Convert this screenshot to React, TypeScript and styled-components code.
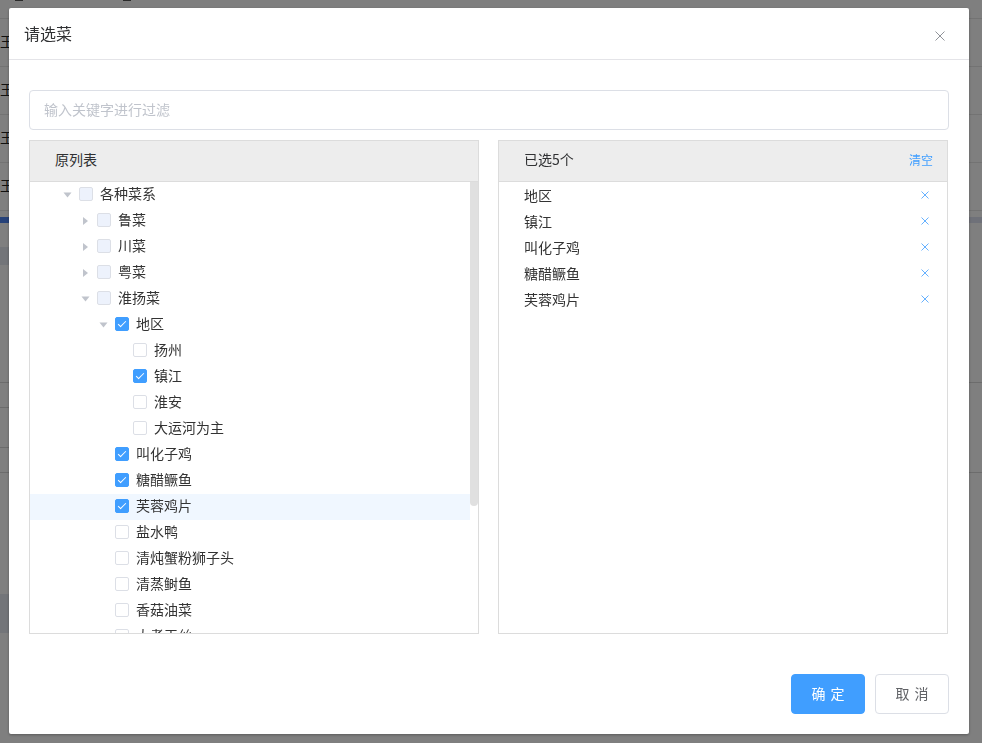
import styled, { createGlobalStyle } from "styled-components";

type CheckState = "checked" | "partial" | "empty";
type Caret = "open" | "closed" | "none";

interface TreeNode {
  label: string;
  level: number;
  caret: Caret;
  state: CheckState;
  current?: boolean;
}

const treeNodes: TreeNode[] = [
  { label: "各种菜系", level: 0, caret: "open", state: "partial" },
  { label: "鲁菜", level: 1, caret: "closed", state: "partial" },
  { label: "川菜", level: 1, caret: "closed", state: "partial" },
  { label: "粤菜", level: 1, caret: "closed", state: "partial" },
  { label: "淮扬菜", level: 1, caret: "open", state: "partial" },
  { label: "地区", level: 2, caret: "open", state: "checked" },
  { label: "扬州", level: 3, caret: "none", state: "empty" },
  { label: "镇江", level: 3, caret: "none", state: "checked" },
  { label: "淮安", level: 3, caret: "none", state: "empty" },
  { label: "大运河为主", level: 3, caret: "none", state: "empty" },
  { label: "叫化子鸡", level: 2, caret: "none", state: "checked" },
  { label: "糖醋鳜鱼", level: 2, caret: "none", state: "checked" },
  { label: "芙蓉鸡片", level: 2, caret: "none", state: "checked", current: true },
  { label: "盐水鸭", level: 2, caret: "none", state: "empty" },
  { label: "清炖蟹粉狮子头", level: 2, caret: "none", state: "empty" },
  { label: "清蒸鲥鱼", level: 2, caret: "none", state: "empty" },
  { label: "香菇油菜", level: 2, caret: "none", state: "empty" },
  { label: "大煮干丝", level: 2, caret: "none", state: "empty" },
];

const selected = ["地区", "镇江", "叫化子鸡", "糖醋鳜鱼", "芙蓉鸡片"];

const App = () => {
  return (
    <>
      <GlobalStyle />
      <Page>
        <TopRow>
          <TopMark />
          <TopMark />
        </TopRow>
        {[0, 1, 2, 3].map((i) => (
          <DataRow key={i}>王</DataRow>
        ))}
        <Band>
          <BandStart />
        </Band>
        <SideBlock $gap={24} $height={18} />
        <Rule $gap={117} />
        <Rule $gap={24} $short />
        <Rule $gap={39} $short />
        <Rule $gap={24} />
        <SideBlock $gap={121} $height={39} />
      </Page>
      <Mask />
      <Dialog>
        <DialogHeader>
          <DialogTitle>请选菜</DialogTitle>
          <CloseIcon width="10" height="10" viewBox="0 0 10 10">
            <path d="M0.5 0.5 L9.5 9.5 M9.5 0.5 L0.5 9.5" />
          </CloseIcon>
        </DialogHeader>
        <DialogBody>
          <FilterInput placeholder="输入关键字进行过滤" />
          <Panels>
            <Panel>
              <PanelHeader>原列表</PanelHeader>
              <TreeArea>
                <Tree>
                  {treeNodes.map((node) => (
                    <TreeRow key={node.label} $level={node.level} $current={node.current}>
                      <CaretSlot>
                        {node.caret !== "none" && <CaretIcon $open={node.caret === "open"} />}
                      </CaretSlot>
                      <Check $state={node.state} />
                      <TreeLabel>{node.label}</TreeLabel>
                    </TreeRow>
                  ))}
                </Tree>
                <ScrollTrack>
                  <ScrollThumb />
                </ScrollTrack>
              </TreeArea>
            </Panel>
            <Panel>
              <PanelHeader>
                已选5个
                <ClearLink>清空</ClearLink>
              </PanelHeader>
              <SelectedList>
                {selected.map((label) => (
                  <SelectedRow key={label}>
                    <SelectedLabel>{label}</SelectedLabel>
                    <RemoveIcon width="8" height="8" viewBox="0 0 8 8">
                      <path d="M0.5 0.5 L7.5 7.5 M7.5 0.5 L0.5 7.5" />
                    </RemoveIcon>
                  </SelectedRow>
                ))}
              </SelectedList>
            </Panel>
          </Panels>
        </DialogBody>
        <DialogFooter>
          <PrimaryButton>确 定</PrimaryButton>
          <PlainButton>取 消</PlainButton>
        </DialogFooter>
      </Dialog>
    </>
  );
};

export default App;

const GlobalStyle = createGlobalStyle`
  html, body {
    margin: 0;
    padding: 0;
    height: 100%;
    overflow: hidden;
    background: #fff;
    font-family: "Noto Sans CJK SC", "Liberation Sans", sans-serif;
  }
  * {
    box-sizing: border-box;
  }
`;

const Page = styled.div`
  display: flex;
  flex-direction: column;
  height: 743px;
  overflow: hidden;
  color: #333;
`;

const TopRow = styled.div`
  display: flex;
  gap: 100px;
  height: 19px;
  padding-left: 15px;
  border-bottom: 1px solid #e6e6e6;
`;

const TopMark = styled.div`
  width: 8px;
  height: 1px;
  background: #555;
`;

const DataRow = styled.div`
  display: flex;
  align-items: center;
  height: 48px;
  padding-bottom: 4px;
  font-size: 14px;
  border-bottom: 1px solid #e6e6e6;
  color: #222;
`;

const Band = styled.div`
  display: flex;
  height: 6px;
  margin-top: 6px;
  background: #dfe3f2;
`;

const BandStart = styled.div`
  width: 60px;
  background: #4f84f2;
`;

const SideBlock = styled.div<{ $gap: number; $height: number }>`
  width: 60px;
  height: ${(p) => p.$height}px;
  margin-top: ${(p) => p.$gap}px;
  background: #e6ebf2;
`;

const Rule = styled.div<{ $gap: number; $short?: boolean }>`
  flex-shrink: 0;
  width: ${(p) => (p.$short ? "60px" : "100%")};
  height: 1px;
  margin-top: ${(p) => p.$gap}px;
  background: #d8d8d8;
`;

const Mask = styled.div`
  position: fixed;
  inset: 0;
  background: rgba(0, 0, 0, 0.5);
`;

const Dialog = styled.div`
  position: fixed;
  top: 8px;
  left: 9px;
  display: flex;
  flex-direction: column;
  width: 960px;
  height: 726px;
  background: #fff;
  border-radius: 2px;
  box-shadow: 0 1px 3px rgba(0, 0, 0, 0.3);
`;

const DialogHeader = styled.div`
  display: flex;
  align-items: center;
  justify-content: space-between;
  height: 52px;
  padding: 0 24px 0 15px;
  border-bottom: 1px solid #e4e4e8;
`;

const DialogTitle = styled.div`
  margin-top: -1px;
  font-size: 16px;
  line-height: 24px;
  color: #303133;
`;

const CloseIcon = styled.svg`
  margin-top: 4px;
  fill: none;
  stroke: #909399;
  stroke-width: 1;
`;

const DialogBody = styled.div`
  display: flex;
  flex-direction: column;
  padding: 30px 20px 0;
`;

const FilterInput = styled.input`
  width: 920px;
  height: 40px;
  padding: 0 14px 2px;
  margin-bottom: 10px;
  font-family: inherit;
  font-size: 14px;
  color: #606266;
  background: #fff;
  border: 1px solid #dcdfe6;
  border-radius: 4px;
  outline: none;

  &::placeholder {
    color: #c0c4cc;
  }
`;

const Panels = styled.div`
  display: flex;
  gap: 19px;
`;

const Panel = styled.div`
  display: flex;
  flex-direction: column;
  width: 450px;
  height: 494px;
  border: 1px solid #dcdcdc;
`;

const PanelHeader = styled.div`
  display: flex;
  flex-shrink: 0;
  align-items: center;
  justify-content: space-between;
  height: 41px;
  padding: 0 14px 4px 25px;
  font-size: 14px;
  color: #303133;
  background: #ededed;
  border-bottom: 1px solid #dcdcdc;
`;

const ClearLink = styled.span`
  font-size: 12px;
  color: #409eff;
`;

const TreeArea = styled.div`
  display: flex;
  flex: 1;
  min-height: 0;
`;

const Tree = styled.div`
  flex: 1;
  overflow: hidden;
`;

const TreeRow = styled.div<{ $level: number; $current?: boolean }>`
  display: flex;
  align-items: center;
  height: 26px;
  padding-left: ${(p) => 25 + p.$level * 18}px;
  font-size: 14px;
  color: #333;
  background: ${(p) => (p.$current ? "#f0f7ff" : "transparent")};
`;

const TreeLabel = styled.span`
  margin-bottom: 4px;
`;

const CaretSlot = styled.span`
  display: flex;
  flex-shrink: 0;
  align-items: center;
  justify-content: center;
  width: 24px;
  height: 24px;
`;

const CaretIcon = styled.span<{ $open: boolean }>`
  width: 0;
  height: 0;
  border: 4px solid transparent;
  border-left: 5px solid #c0c4cc;
  border-right-width: 0;
  transform: ${(p) => (p.$open ? "rotate(90deg)" : "none")};
`;

const Check = styled.span<{ $state: CheckState }>`
  position: relative;
  flex-shrink: 0;
  width: 14px;
  height: 14px;
  margin-right: 7px;
  margin-top: -2px;
  border: 1px solid ${(p) => (p.$state === "checked" ? "#409eff" : "#dcdfe6")};
  border-radius: 2px;
  background: ${(p) =>
    p.$state === "checked" ? "#409eff" : p.$state === "partial" ? "#edf2fc" : "#fff"};

  &::after {
    content: "";
    display: ${(p) => (p.$state === "checked" ? "block" : "none")};
    position: absolute;
    left: 4px;
    top: 1px;
    width: 3px;
    height: 7px;
    border: 1px solid #fff;
    border-top: 0;
    border-left: 0;
    transform: rotate(45deg);
  }
`;

const ScrollTrack = styled.div`
  flex-shrink: 0;
  width: 8px;
`;

const ScrollThumb = styled.div`
  height: 324px;
  background: #e0e0e0;
  border-radius: 0 0 4px 4px;
`;

const SelectedList = styled.div`
  display: flex;
  flex-direction: column;
`;

const SelectedRow = styled.div`
  display: flex;
  align-items: center;
  justify-content: space-between;
  height: 26px;
  padding: 0 18px 0 25px;
`;

const SelectedLabel = styled.span`
  font-size: 14px;
  color: #333;
`;

const RemoveIcon = styled.svg`
  fill: none;
  stroke: #66b1ff;
  stroke-width: 1;
`;

const DialogFooter = styled.div`
  display: flex;
  justify-content: flex-end;
  gap: 10px;
  padding: 40px 20px 20px;
`;

const PrimaryButton = styled.button`
  width: 74px;
  height: 40px;
  padding: 0 0 2px;
  font-family: inherit;
  font-size: 14px;
  word-spacing: 2px;
  color: #fff;
  background: #409eff;
  border: 1px solid #409eff;
  border-radius: 4px;
`;

const PlainButton = styled(PrimaryButton)`
  color: #606266;
  background: #fff;
  border-color: #dcdfe6;
`;
